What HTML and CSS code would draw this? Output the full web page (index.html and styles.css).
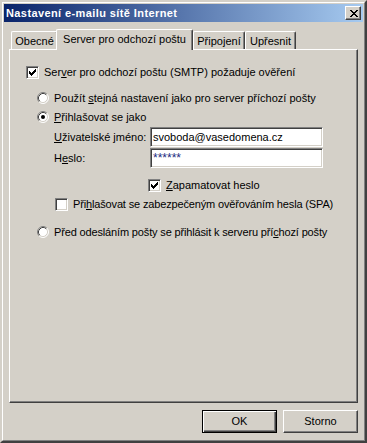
FILE: index.html
```html
<!DOCTYPE html>
<html lang="cs">
<head>
<meta charset="utf-8">
<title>Nastavení e-mailu sítě Internet</title>
<link rel="stylesheet" href="styles.css">
</head>
<body>
<div class="window">
  <div class="frame">
    <div class="titlebar">
      <span class="title">Nastavení e-mailu sítě Internet</span>
      <span class="close">
        <svg width="8" height="7" viewBox="0 0 8 7" shape-rendering="crispEdges"><path fill="#000" d="M0 0h2v1h-2z M6 0h2v1h-2z M1 1h2v1h-2z M5 1h2v1h-2z M2 2h4v1h-4z M3 3h2v1h-2z M2 4h4v1h-4z M1 5h2v1h-2z M5 5h2v1h-2z M0 6h2v1h-2z M6 6h2v1h-2z"/></svg>
      </span>
    </div>
    <div class="body">
      <div class="tabs">
        <div class="tab tab-general">Obecné</div>
        <div class="tab tab-server active">Server pro odchozí poštu</div>
        <div class="tab tab-conn">Připojení</div>
        <div class="tab tab-adv">Upřesnit</div>
      </div>
      <div class="panel">
        <div class="row row-auth">
          <span class="check"><svg width="7" height="7" viewBox="0 0 7 7" shape-rendering="crispEdges"><polygon fill="#000" points="0,2 1,2 1,3 2,3 2,4 3,4 3,3 4,3 4,2 5,2 5,1 6,1 6,0 7,0 7,3 6,3 6,4 5,4 5,5 4,5 4,6 3,6 3,7 2,7 2,6 1,6 1,5 0,5"/></svg></span>
          <span class="label">Ser<u>v</u>er pro odchozí poštu (SMTP) požaduje ověření</span>
        </div>
        <div class="row row-radio1">
          <span class="radio"><svg width="12" height="12" viewBox="0 0 12 12"><circle cx="6" cy="6" r="5" fill="#fff"/><path d="M2.11 9.89A5.5 5.5 0 0 1 9.89 2.11" fill="none" stroke="#808080"/><path d="M9.89 2.11A5.5 5.5 0 0 1 2.11 9.89" fill="none" stroke="#fff"/><path d="M2.82 9.18A4.5 4.5 0 0 1 9.18 2.82" fill="none" stroke="#404040"/><path d="M9.18 2.82A4.5 4.5 0 0 1 2.82 9.18" fill="none" stroke="#d4d0c8"/></svg></span>
          <span class="label">Použít <u>s</u>tejná nastavení jako pro server příchozí pošty</span>
        </div>
        <div class="row row-radio2">
          <span class="radio"><svg width="12" height="12" viewBox="0 0 12 12"><circle cx="6" cy="6" r="5" fill="#fff"/><path d="M2.11 9.89A5.5 5.5 0 0 1 9.89 2.11" fill="none" stroke="#808080"/><path d="M9.89 2.11A5.5 5.5 0 0 1 2.11 9.89" fill="none" stroke="#fff"/><path d="M2.82 9.18A4.5 4.5 0 0 1 9.18 2.82" fill="none" stroke="#404040"/><path d="M9.18 2.82A4.5 4.5 0 0 1 2.82 9.18" fill="none" stroke="#d4d0c8"/><circle cx="6" cy="6" r="2" fill="#000"/></svg></span>
          <span class="label"><u>P</u>řihlašovat se jako</span>
        </div>
        <div class="field field-user">
          <span class="field-label"><u>U</u>živatelské jméno:</span>
          <span class="textbox">svoboda@vasedomena.cz</span>
        </div>
        <div class="field field-pass">
          <span class="field-label">H<u>e</u>slo:</span>
          <span class="textbox password">******</span>
        </div>
        <div class="row row-remember">
          <span class="check"><svg width="7" height="7" viewBox="0 0 7 7" shape-rendering="crispEdges"><polygon fill="#000" points="0,2 1,2 1,3 2,3 2,4 3,4 3,3 4,3 4,2 5,2 5,1 6,1 6,0 7,0 7,3 6,3 6,4 5,4 5,5 4,5 4,6 3,6 3,7 2,7 2,6 1,6 1,5 0,5"/></svg></span>
          <span class="label"><u>Z</u>apamatovat heslo</span>
        </div>
        <div class="row row-spa">
          <span class="check"></span>
          <span class="label">Při<u>h</u>lašovat se zabezpečeným ověřováním hesla (SPA)</span>
        </div>
        <div class="row row-radio3">
          <span class="radio"><svg width="12" height="12" viewBox="0 0 12 12"><circle cx="6" cy="6" r="5" fill="#fff"/><path d="M2.11 9.89A5.5 5.5 0 0 1 9.89 2.11" fill="none" stroke="#808080"/><path d="M9.89 2.11A5.5 5.5 0 0 1 2.11 9.89" fill="none" stroke="#fff"/><path d="M2.82 9.18A4.5 4.5 0 0 1 9.18 2.82" fill="none" stroke="#404040"/><path d="M9.18 2.82A4.5 4.5 0 0 1 2.82 9.18" fill="none" stroke="#d4d0c8"/></svg></span>
          <span class="label">Před odesláním pošty se přihlásit k serveru pří<u>c</u>hozí pošty</span>
        </div>
      </div>
      <div class="buttons">
        <button class="btn btn-default" type="button">OK</button>
        <button class="btn" type="button">Storno</button>
      </div>
    </div>
  </div>
</div>
</body>
</html>
```

FILE: styles.css
```css
html, body {
  margin: 0;
  padding: 0;
  background: #d4d0c8;
}

body {
  font-family: "Liberation Sans", Arial, sans-serif;
  font-size: 11px;
  line-height: 13px;
  color: #000;
}

.window {
  width: 367px;
  height: 443px;
  box-sizing: border-box;
  border: 2px solid;
  border-color: #d4d0c8 #404040 #404040 #d4d0c8;
  background: #d4d0c8;
}

.frame {
  height: 100%;
  box-sizing: border-box;
  border: 1px solid;
  border-color: #fff #808080 #808080 #fff;
  padding: 1px;
  display: flex;
  flex-direction: column;
}

.titlebar {
  height: 18px;
  flex: none;
  display: flex;
  align-items: center;
  justify-content: space-between;
  padding: 0 2px;
  background: linear-gradient(to right, #0a246a, #a6caf0);
}

.title {
  color: #fff;
  font-weight: bold;
  letter-spacing: 0.4px;
  white-space: nowrap;
}

.close {
  width: 16px;
  height: 14px;
  box-sizing: border-box;
  border: 1px solid;
  border-color: #fff #404040 #404040 #fff;
  box-shadow: inset -1px -1px #808080;
  background: #d4d0c8;
  display: flex;
  align-items: center;
  justify-content: center;
  padding-left: 1px;
}

.close svg {
  display: block;
}

.body {
  flex: 1;
  display: flex;
  flex-direction: column;
  padding: 7px 5px 0 5px;
}

.tabs {
  height: 20px;
  display: flex;
  align-items: flex-end;
  padding-left: 2px;
}

.tab {
  height: 18px;
  box-sizing: border-box;
  padding-top: 3px;
  text-align: center;
  white-space: nowrap;
  border-top: 1px solid #fff;
  border-left: 1px solid #fff;
  border-right: 1px solid #404040;
  box-shadow: inset -1px 0 #808080;
  border-top-left-radius: 2px;
  border-top-right-radius: 2px;
  background: #d4d0c8;
}

.tab-general { width: 47px; }
.tab-server { width: 133px; }
.tab-conn { width: 52px; }
.tab-adv { width: 51px; }

.tab.active {
  width: 137px;
  height: 21px;
  margin: 0 0 -1px -2px;
  position: relative;
  z-index: 1;
  padding-top: 3px;
}

.panel {
  height: 354px;
  box-sizing: border-box;
  border: 1px solid;
  border-color: #fff #404040 #404040 #fff;
  box-shadow: inset -1px -1px #808080;
  display: flex;
  flex-direction: column;
}

.row {
  height: 16px;
  display: flex;
  align-items: center;
  gap: 5px;
  white-space: nowrap;
}

.check {
  width: 13px;
  height: 13px;
  box-sizing: border-box;
  flex: none;
  border: 1px solid;
  border-color: #808080 #fff #fff #808080;
  box-shadow: inset 1px 1px #404040, inset -1px -1px #d4d0c8;
  background: #fff;
  display: flex;
  align-items: center;
  justify-content: center;
}

.check svg {
  display: block;
}

.radio {
  width: 12px;
  height: 12px;
  flex: none;
}

.radio svg {
  display: block;
}

.row-auth { margin-top: 14px; padding-left: 16px; }
.row-radio1 { margin-top: 10px; padding-left: 27px; }
.row-radio2 { margin-top: 3px; padding-left: 27px; }
.row-remember { margin-top: 9px; padding-left: 138px; }
.row-spa { margin-top: 3px; padding-left: 45px; }
.row-radio3 { margin-top: 12px; padding-left: 27px; }

.row-spa .label,
.row-radio3 .label {
  letter-spacing: -0.15px;
}

.field {
  height: 20px;
  display: flex;
  align-items: center;
  padding-left: 44px;
  white-space: nowrap;
}

.field-user { margin-top: 2px; }
.field-pass { margin-top: 1px; }

.field-label {
  width: 96px;
  flex: none;
}

.textbox {
  width: 173px;
  height: 20px;
  box-sizing: border-box;
  border: 1px solid;
  border-color: #808080 #fff #fff #808080;
  box-shadow: inset 1px 1px #404040, inset -1px -1px #d4d0c8;
  background: #fff;
  padding: 3px 0 0 2px;
}

.password {
  color: #1c2a80;
  font-size: 12px;
}

.buttons {
  margin-top: 7px;
  display: flex;
  justify-content: flex-end;
  gap: 6px;
}

.btn {
  width: 75px;
  height: 23px;
  box-sizing: border-box;
  margin: 0;
  padding: 0;
  font: inherit;
  color: #000;
  background: #d4d0c8;
  border: 1px solid;
  border-color: #fff #404040 #404040 #fff;
  box-shadow: inset -1px -1px #808080;
  border-radius: 0;
}

.btn-default {
  border-color: #000;
  box-shadow: inset 1px 1px #fff, inset -1px -1px #404040, inset -2px -2px #808080;
}
```
